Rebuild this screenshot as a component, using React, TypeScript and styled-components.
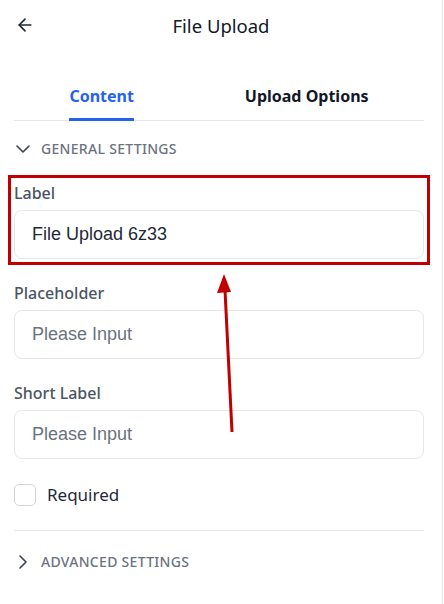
import styled, { createGlobalStyle } from "styled-components";
import { ArrowLeft, ChevronDown, ChevronRight } from "lucide-react";

const GlobalStyle = createGlobalStyle`
    body {
        margin: 0;
        background: #ffffff;
        font-family: "Noto Sans", "Open Sans", sans-serif;
        color: #1f2937;
    }
`;

const Panel = styled.div`
    position: relative;
    width: 443px;
    min-height: 604px;
    border-right: 1px solid #e5e7eb;
    box-sizing: border-box;
    padding: 0 18px 0 14px;
`;

const Header = styled.div`
    height: 50px;
    display: grid;
    grid-template-columns: 1fr auto 1fr;
    align-items: center;
`;

const BackButton = styled.button`
    justify-self: start;
    display: flex;
    align-items: center;
    background: none;
    border: none;
    padding: 0;
    margin-left: 1px;
    color: #1f2937;
    cursor: pointer;
`;

const Title = styled.h1`
    margin: 0 0 0 4px;
    font-size: 18.5px;
    font-weight: 400;
    color: #111827;
`;

const Tabs = styled.div`
    margin-top: 22px;
    display: flex;
    justify-content: space-around;
    border-bottom: 1px solid #e5e7eb;
`;

const Tab = styled.div<{ active?: boolean }>`
    padding: 12px 0 10px;
    line-height: 24px;
    font-size: 16px;
    font-weight: 700;
    color: ${(props) => (props.active ? "#2563eb" : "#111827")};
    border-bottom: 3px solid ${(props) => (props.active ? "#2563eb" : "transparent")};
    margin-bottom: -1px;
    cursor: pointer;
`;

const SectionHeader = styled.div<{ top: number }>`
    margin-top: ${(props) => props.top}px;
    display: flex;
    align-items: center;
    gap: 6px;
    line-height: 24px;
    font-size: 14px;
    font-weight: 500;
    letter-spacing: 0.3px;
    text-transform: uppercase;
    color: #6b7280;

    svg {
        color: #374151;
        margin-left: -3px;
    }
`;

const Fields = styled.div`
    margin-top: 20px;
    display: flex;
    flex-direction: column;
    gap: 22px;
`;

const Field = styled.div<{ highlighted?: boolean }>`
    display: flex;
    flex-direction: column;
    outline: ${(props) => (props.highlighted ? "3px solid #c00000" : "none")};
    outline-offset: 3px;
`;

const Label = styled.label`
    line-height: 24px;
    margin-bottom: 5px;
    font-size: 16px;
    font-weight: 500;
    color: #4b5563;
`;

const Input = styled.input`
    height: 49px;
    box-sizing: border-box;
    border: 1px solid #e5e7eb;
    border-radius: 8px;
    padding: 0 17px;
    font-family: "Liberation Sans", Arial, sans-serif;
    font-size: 18px;
    color: #1f2937;
    outline: none;

    &::placeholder {
        color: #6b7280;
    }
`;

const CheckRow = styled.label`
    margin-top: 25px;
    display: flex;
    align-items: center;
    gap: 11px;
    font-size: 17px;
    line-height: 22px;
    color: #1f2937;
`;

const Box = styled.span`
    width: 22px;
    height: 22px;
    box-sizing: border-box;
    border: 1px solid #d1d5db;
    border-radius: 5px;
    background: #fff;
`;

const Divider = styled.hr`
    margin: 24px 0 0;
    border: none;
    border-top: 1px solid #e5e7eb;
`;

const Annotation = styled.svg`
    position: absolute;
    left: 0;
    top: 0;
    pointer-events: none;
`;

function App() {
    return (
        <>
            <GlobalStyle />
            <Panel>
                <Header>
                    <BackButton>
                        <ArrowLeft size={20} strokeWidth={2} />
                    </BackButton>
                    <Title>File Upload</Title>
                    <span />
                </Header>
                <Tabs>
                    <Tab active>Content</Tab>
                    <Tab>Upload Options</Tab>
                </Tabs>
                <SectionHeader top={16}>
                    <ChevronDown size={24} strokeWidth={1.6} />
                    General Settings
                </SectionHeader>
                <Fields>
                    <Field highlighted>
                        <Label>Label</Label>
                        <Input defaultValue="File Upload 6z33" />
                    </Field>
                    <Field>
                        <Label>Placeholder</Label>
                        <Input placeholder="Please Input" />
                    </Field>
                    <Field>
                        <Label>Short Label</Label>
                        <Input placeholder="Please Input" />
                    </Field>
                </Fields>
                <CheckRow>
                    <Box />
                    Required
                </CheckRow>
                <Divider />
                <SectionHeader top={19}>
                    <ChevronRight size={24} strokeWidth={1.6} />
                    Advanced Settings
                </SectionHeader>
                <Annotation width="444" height="604" viewBox="0 0 444 604">
                    <line x1="232" y1="432" x2="225" y2="290" stroke="#c00000" strokeWidth="3" />
                    <polygon points="224,274 217,293 231,292" fill="#c00000" />
                </Annotation>
            </Panel>
        </>
    );
}

export default App;
